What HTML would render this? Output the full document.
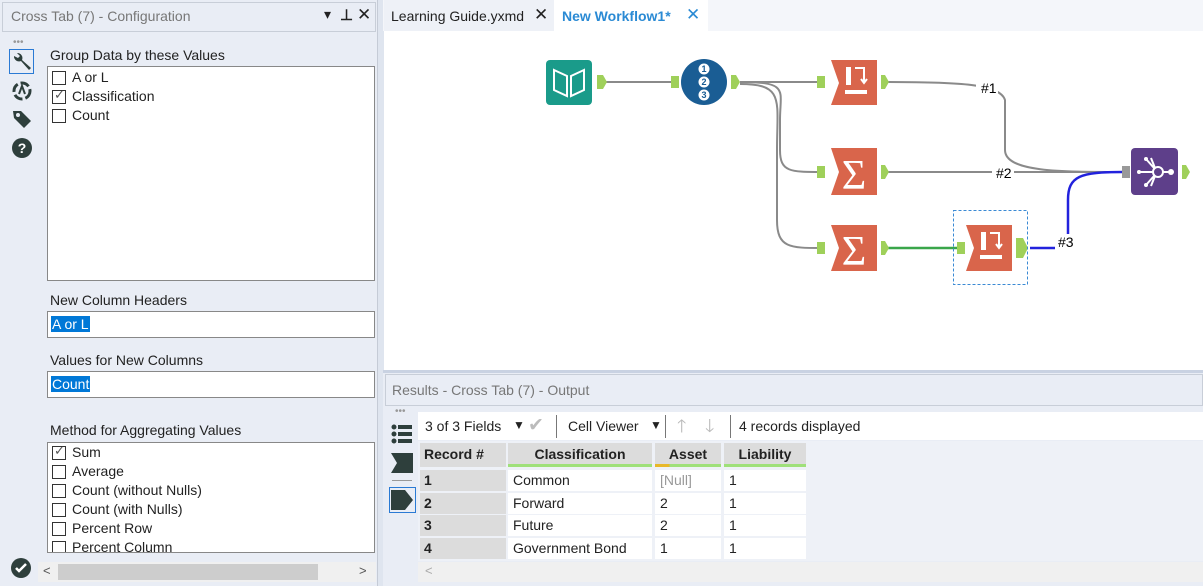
<!DOCTYPE html>
<html><head><style>
*{box-sizing:border-box;margin:0;padding:0}
body{width:1203px;height:586px;overflow:hidden;background:#dfe5ef;font-family:"Liberation Sans",sans-serif;font-size:14px;color:#222;position:relative}
.abs{position:absolute}
.cb{position:absolute;width:14px;height:14px;border:1px solid #333;background:#fff}
.lbl{position:absolute;font-size:14px;color:#222}
.th{position:absolute;top:443px;height:24px;background:#dcdcdc;font-weight:bold;font-size:14px;text-align:center;line-height:22px;border-bottom:3px solid #9fe07a}
.rn{position:absolute;left:420px;width:86px;height:21px;background:#dcdcdc;font-weight:bold;padding-left:4px;line-height:21px}
.td{position:absolute;height:21px;background:#fff;padding-left:5px;line-height:21px}
</style></head><body>
<div class="abs" style="left:0;top:0;width:378px;height:586px;background:#e9edf5;border-right:1px solid #c5cbd6"></div>
<div class="abs" style="left:2px;top:2px;width:374px;height:30px;background:#e9edf5;border:1px solid #c8ced8"></div>
<div class="abs" style="left:11px;top:8px;color:#777;font-size:14px">Cross Tab (7) - Configuration</div>
<div class="abs" style="left:324px;top:6px;font-size:14px;color:#222">▾</div>
<div class="abs" style="left:340px;top:6px;font-size:15px;font-weight:bold">⊥</div>
<div class="abs" style="left:357px;top:5px;font-size:17px">✕</div>
<div class="abs" style="left:13px;top:37px;color:#999;font-size:10px">•••</div>
<div class="abs" style="left:9px;top:49px;width:25px;height:25px;border:1px solid #2a7ad4"></div>
<svg class="abs" style="left:11px;top:51px" width="22" height="22" viewBox="0 0 22 22"><path d="M3 5a5 5 0 0 0 7 5l8 9 2-2-9-8a5 5 0 0 0-5-7l3 3-2 2z" fill="#2e3f3c"/></svg>
<svg class="abs" style="left:11px;top:80px" width="22" height="22" viewBox="0 0 22 22"><circle cx="11" cy="11" r="8" fill="none" stroke="#2e3f3c" stroke-width="3" stroke-dasharray="9 3"/><path d="M8 14l3-8 3 8" stroke="#2e3f3c" stroke-width="2" fill="none"/></svg>
<svg class="abs" style="left:11px;top:108px" width="22" height="22" viewBox="0 0 22 22"><path d="M2 3h8l10 10-7 7L3 10z" fill="#2e3f3c"/><circle cx="7" cy="7" r="2" fill="#e9edf5"/></svg>
<svg class="abs" style="left:11px;top:137px" width="22" height="22" viewBox="0 0 22 22"><circle cx="11" cy="11" r="10" fill="#2e3f3c"/><text x="11" y="16" font-size="14" font-weight="bold" fill="#fff" text-anchor="middle" font-family="Liberation Sans">?</text></svg>
<svg class="abs" style="left:10px;top:557px" width="22" height="22" viewBox="0 0 22 22"><circle cx="11" cy="11" r="10" fill="#2e3f3c"/><path d="M6 11l3 3 7-7" stroke="#fff" stroke-width="2.5" fill="none"/></svg>
<div class="abs" style="left:50px;top:47px">Group Data by these Values</div>
<div class="abs" style="left:47px;top:66px;width:328px;height:215px;background:#fff;border:1px solid #888"></div>
<div class="cb" style="left:52px;top:71px"></div><div class="lbl" style="left:72px;top:69px">A or L</div>
<div class="cb" style="left:52px;top:90px"></div><div class="abs" style="left:54px;top:87px;font-size:13px;color:#555">✓</div><div class="lbl" style="left:72px;top:88px">Classification</div>
<div class="cb" style="left:52px;top:109px"></div><div class="lbl" style="left:72px;top:107px">Count</div>
<div class="abs" style="left:50px;top:292px">New Column Headers</div>
<div class="abs" style="left:47px;top:311px;width:328px;height:27px;background:#fff;border:1px solid #888"></div>
<div class="abs" style="left:51px;top:316px;background:#0078d7;color:#fff;padding:0 1px">A or L</div>
<div class="abs" style="left:50px;top:352px">Values for New Columns</div>
<div class="abs" style="left:47px;top:371px;width:328px;height:27px;background:#fff;border:1px solid #888"></div>
<div class="abs" style="left:51px;top:376px;background:#0078d7;color:#fff;padding:0 1px">Count</div>
<div class="abs" style="left:50px;top:422px">Method for Aggregating Values</div>
<div class="abs" style="left:47px;top:442px;width:328px;height:111px;background:#fff;border:1px solid #888;overflow:hidden"></div>
<div class="cb" style="left:52px;top:446px"></div><div class="abs" style="left:54px;top:443px;font-size:13px;color:#555">✓</div><div class="lbl" style="left:72px;top:444px">Sum</div>
<div class="cb" style="left:52px;top:465px"></div><div class="lbl" style="left:72px;top:463px">Average</div>
<div class="cb" style="left:52px;top:484px"></div><div class="lbl" style="left:72px;top:482px">Count (without Nulls)</div>
<div class="cb" style="left:52px;top:503px"></div><div class="lbl" style="left:72px;top:501px">Count (with Nulls)</div>
<div class="cb" style="left:52px;top:522px"></div><div class="lbl" style="left:72px;top:520px">Percent Row</div>
<div class="abs" style="left:48px;top:538px;width:326px;height:14px;overflow:hidden"><div class="cb" style="left:4px;top:3px"></div><div class="lbl" style="left:24px;top:1px">Percent Column</div></div>
<div class="abs" style="left:38px;top:562px;width:338px;height:20px;background:#f0f0f0"></div>
<div class="abs" style="left:58px;top:564px;width:260px;height:16px;background:#cdcdcd"></div>
<div class="abs" style="left:43px;top:563px;color:#555;font-size:13px">&lt;</div>
<div class="abs" style="left:359px;top:563px;color:#555;font-size:13px">&gt;</div>
<div class="abs" style="left:383px;top:0;width:820px;height:31px;background:#f4f6fa"></div>
<div class="abs" style="left:384px;top:0;width:170px;height:31px;background:#eef1f7"></div>
<div class="abs" style="left:391px;top:8px;font-size:14px;color:#222">Learning Guide.yxmd</div>
<div class="abs" style="left:534px;top:5px;font-size:17px">✕</div>
<div class="abs" style="left:554px;top:0;width:154px;height:31px;background:#fff"></div>
<div class="abs" style="left:562px;top:8px;font-size:14px;color:#2a8ad4;font-weight:bold">New Workflow1*</div>
<div class="abs" style="left:686px;top:5px;font-size:17px;color:#2a8ad4">✕</div>
<div class="abs" style="left:384px;top:31px;width:819px;height:339px;background:#fff"></div>
<svg class="abs" style="left:384px;top:31px" width="819" height="339" viewBox="384 31 819 339">
<g fill="none" stroke="#8a8a8a" stroke-width="2">
<path d="M606 82H672"/><path d="M740 82H822"/><path d="M740 82C790 82 780 90 780 120V150C780 172 790 172 822 172"/><path d="M740 84C785 84 777 100 777 150V220C777 248 790 248 822 248"/>
<path d="M886 82C960 82 1000 84 1005 100V150C1005 172 1060 172 1123 172"/><path d="M886 172H1123"/>
</g>
<path d="M886 248H957" stroke="#3aa64a" stroke-width="2.5" fill="none"/>
<path d="M1030 248H1055M1068 234V200C1068 176 1080 172 1123 172" stroke="#2222dd" stroke-width="2.5" fill="none"/>
<rect x="976" y="80" width="22" height="16" fill="#fff"/><text x="981" y="93" font-size="14" font-family="Liberation Sans">#1</text>
<rect x="992" y="164" width="22" height="16" fill="#fff"/><text x="996" y="178" font-size="14" font-family="Liberation Sans">#2</text>
<text x="1058" y="247" font-size="14" font-family="Liberation Sans">#3</text>
<rect x="546" y="60" width="46" height="45" rx="4" fill="#1a9b8a"/><path d="M554 70l13 6v20l-13-6zM584 70l-13 6v20l13-6z" fill="none" stroke="#fff" stroke-width="2"/>
<path d="M597 75h6l4 7-4 7h-6z" fill="#9fd05a"/>
<ellipse cx="704" cy="82" rx="23" ry="23" fill="#1a5d94"/>
<g fill="#fff"><circle cx="704" cy="69" r="5.5"/><circle cx="704" cy="82" r="5.5"/><circle cx="704" cy="95" r="5.5"/></g>
<g fill="#1a5d94" font-size="9" font-weight="bold" text-anchor="middle" font-family="Liberation Sans"><text x="704" y="72">1</text><text x="704" y="85">2</text><text x="704" y="98">3</text></g>
<rect x="671" y="76" width="8" height="12" fill="#9fd05a"/><path d="M731 75h5l4 7-4 7h-5z" fill="#9fd05a"/>
<g fill="#d9654b">
<path d="M831 60h46v45h-46l8-22z"/><path d="M831 148h46v47h-46l8-23z"/><path d="M831 225h46v46h-46l8-23z"/><path d="M966 225h46v46h-46l8-23z"/></g>
<g fill="#fff"><rect x="846" y="67" width="5" height="18"/><rect x="845" y="90" width="22" height="4"/><rect x="981" y="232" width="5" height="18"/><rect x="980" y="255" width="22" height="4"/></g>
<path d="M855 68h9v14M861 79l3 4 3-4M990 233h9v14M996 244l3 4 3-4" stroke="#fff" stroke-width="2" fill="none"/>
<text x="854" y="189" font-size="42" fill="#fff" text-anchor="middle" font-family="Liberation Serif">Σ</text>
<text x="854" y="265" font-size="42" fill="#fff" text-anchor="middle" font-family="Liberation Serif">Σ</text>
<g fill="#9fd05a"><rect x="817" y="76" width="8" height="12"/><rect x="817" y="166" width="8" height="12"/><rect x="817" y="242" width="8" height="12"/><rect x="957" y="242" width="8" height="12"/>
<path d="M881 75h4l4 7-4 7h-4zM881 165h4l4 7-4 7h-4zM881 241h4l4 7-4 7h-4zM1016 238h7l5 10-5 10h-7zM1182 165h4l4 7-4 7h-4z"/></g>
<rect x="953.5" y="210.5" width="74" height="74" fill="none" stroke="#3a8ad4" stroke-dasharray="3 2"/>
<rect x="1131" y="148" width="47" height="47" rx="4" fill="#5e3f8a"/>
<g stroke="#fff" stroke-width="2" fill="none"><circle cx="1158" cy="172" r="5"/><path d="M1153 172h-14M1154 168l-8-9M1154 176l-8 9M1155 168l-4-10M1155 176l-4 10M1163 172h7"/></g>
<g fill="#fff"><circle cx="1139" cy="172" r="2"/><circle cx="1146" cy="159" r="2"/><circle cx="1146" cy="185" r="2"/><circle cx="1171" cy="172" r="3"/></g>
<rect x="1122" y="166" width="8" height="12" fill="#999"/>
</svg>
<div class="abs" style="left:383px;top:370px;width:820px;height:216px;background:#e9edf5;border-top:3px solid #c9d2e2"></div>
<div class="abs" style="left:385px;top:374px;width:818px;height:32px;background:#e9edf5;border:1px solid #c8ced8"></div>
<div class="abs" style="left:392px;top:382px;color:#777;font-size:14px">Results - Cross Tab (7) - Output</div>
<div class="abs" style="left:395px;top:406px;color:#999;font-size:10px">•••</div>
<svg class="abs" style="left:391px;top:423px" width="22" height="22"><g fill="#2e3f3c"><circle cx="3" cy="4" r="2.5"/><rect x="7" y="2" width="14" height="4"/><circle cx="3" cy="11" r="2.5"/><rect x="7" y="9" width="14" height="4"/><circle cx="3" cy="18" r="2.5"/><rect x="7" y="16" width="14" height="4"/></g></svg>
<svg class="abs" style="left:391px;top:453px" width="22" height="20"><path d="M0 0h22v20H0l6-10z" fill="#2e3f3c"/></svg>
<div class="abs" style="left:392px;top:480px;width:20px;height:1px;background:#999"></div>
<div class="abs" style="left:389px;top:487px;width:27px;height:26px;border:1px solid #2a7ad4"></div>
<svg class="abs" style="left:391px;top:490px" width="23" height="20"><path d="M0 0h14l8 10-8 10H0z" fill="#2e3f3c"/></svg>
<div class="abs" style="left:418px;top:412px;width:785px;height:28px;background:#fff"></div>
<div class="abs" style="left:425px;top:418px">3 of 3 Fields</div>
<div class="abs" style="left:513px;top:418px;font-size:12px">▼</div>
<div class="abs" style="left:528px;top:414px;font-size:19px;color:#bbb">✔</div>
<div class="abs" style="left:556px;top:415px;width:1px;height:23px;background:#777"></div>
<div class="abs" style="left:568px;top:418px">Cell Viewer</div>
<div class="abs" style="left:650px;top:418px;font-size:12px">▼</div>
<div class="abs" style="left:665px;top:415px;width:1px;height:23px;background:#777"></div>
<div class="abs" style="left:677px;top:414px;font-size:18px;color:#bbb">🡑</div>
<div class="abs" style="left:705px;top:414px;font-size:18px;color:#bbb">🡓</div>
<div class="abs" style="left:730px;top:415px;width:1px;height:23px;background:#777"></div>
<div class="abs" style="left:739px;top:418px">4 records displayed</div>
<div class="abs" style="left:418px;top:441px;width:785px;height:120px;background:#eef1f7"></div>
<div class="th" style="left:420px;width:86px;text-align:left;padding-left:4px;border-bottom-color:#dcdcdc">Record #</div>
<div class="th" style="left:508px;width:144px">Classification</div>
<div class="th" style="left:655px;width:66px;border-image:linear-gradient(90deg,#e8b82a 0,#e8b82a 15px,#9fe07a 15px) 1">Asset</div>
<div class="th" style="left:724px;width:82px">Liability</div>
<div class="rn" style="top:470px">1</div><div class="td" style="left:508px;top:470px;width:144px">Common</div><div class="td" style="left:655px;top:470px;width:66px;color:#999">[Null]</div><div class="td" style="left:724px;top:470px;width:82px">1</div>
<div class="rn" style="top:493px">2</div><div class="td" style="left:508px;top:493px;width:144px">Forward</div><div class="td" style="left:655px;top:493px;width:66px">2</div><div class="td" style="left:724px;top:493px;width:82px">1</div>
<div class="rn" style="top:515px">3</div><div class="td" style="left:508px;top:515px;width:144px">Future</div><div class="td" style="left:655px;top:515px;width:66px">2</div><div class="td" style="left:724px;top:515px;width:82px">1</div>
<div class="rn" style="top:538px">4</div><div class="td" style="left:508px;top:538px;width:144px">Government Bond</div><div class="td" style="left:655px;top:538px;width:66px">1</div><div class="td" style="left:724px;top:538px;width:82px">1</div>
<div class="abs" style="left:418px;top:562px;width:785px;height:20px;background:#f0f0f0"></div>
<div class="abs" style="left:425px;top:563px;color:#aaa;font-size:13px">&lt;</div>
</body></html>
